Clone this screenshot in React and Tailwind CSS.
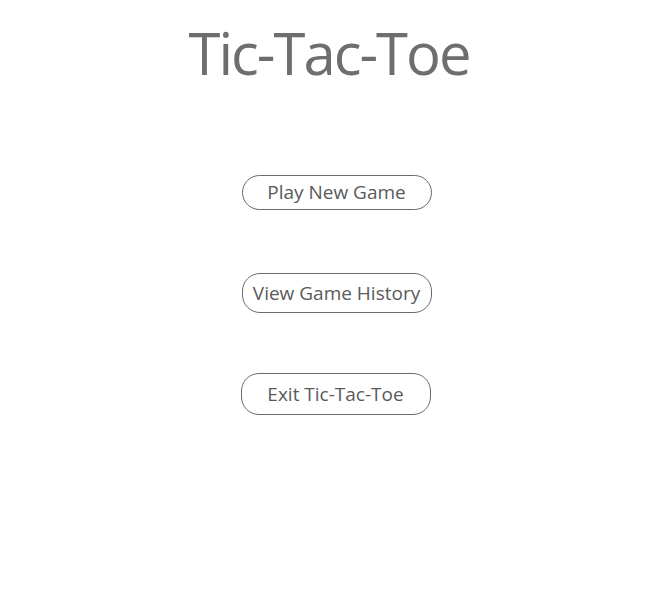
import React from 'react';

const buttons = [
  { label: 'Play New Game', cls: 'h-[35px] mt-[87px] ml-[2px]' },
  { label: 'View Game History', cls: 'h-[40px] mt-[63px] ml-[2px]' },
  { label: 'Exit Tic-Tac-Toe', cls: 'h-[42px] mt-[60px] ml-0' },
];

export default function App() {
  return (
    <div className="w-[671px] h-[613px] bg-white flex flex-col items-center" style={{ fontFamily: '"Open Sans", "Noto Sans", sans-serif' }}>
      <h1 className="mt-[18px] mr-[13px] text-[58px] leading-[70px] text-[#6e6e6e] tracking-[-2px]">Tic-Tac-Toe</h1>
      {buttons.map((b) => (
        <button
          key={b.label}
          className={`w-[190px] rounded-[18px] border border-[#6a6a6a] bg-white text-[19px] text-[#5a5a5a] flex items-center justify-center ${b.cls}`}
        >
          {b.label}
        </button>
      ))}
    </div>
  );
}
